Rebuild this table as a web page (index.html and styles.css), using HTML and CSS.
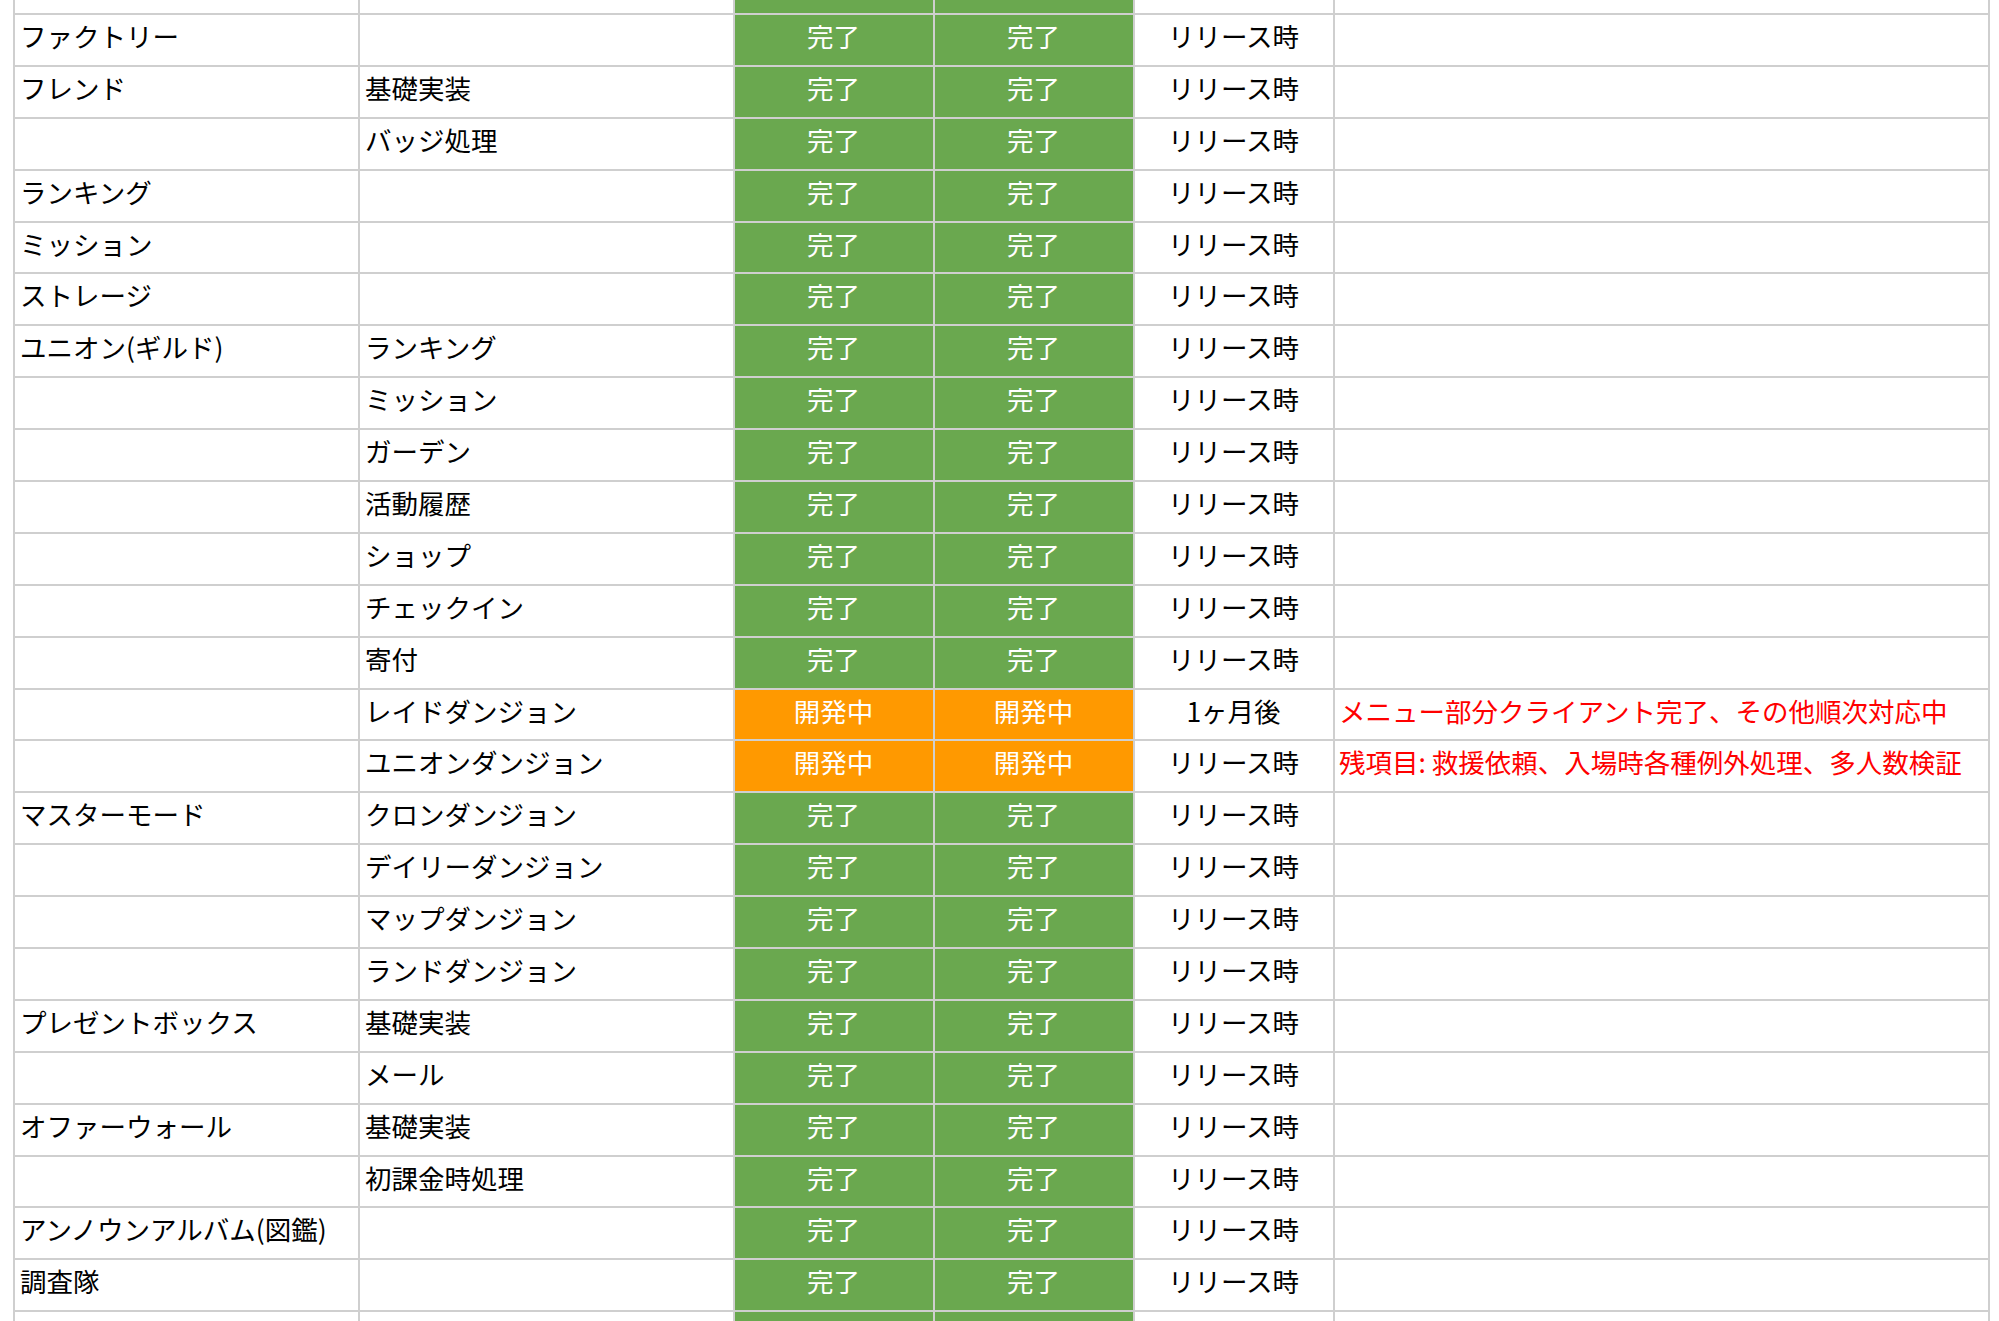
FILE: index.html
```html
<!DOCTYPE html>
<html lang="ja">
<head>
<meta charset="utf-8">
<title>機能実装状況</title>
<link rel="stylesheet" href="styles.css">
</head>
<body>
<table class="sheet">
  <colgroup>
    <col class="c-feature">
    <col class="c-sub">
    <col class="c-status">
    <col class="c-status">
    <col class="c-when">
    <col class="c-note">
  </colgroup>
  <tbody>
    <tr class="row-cut-top"><td></td><td></td><td class="done"></td><td class="done"></td><td></td><td></td></tr>
    <tr><td>ファクトリー</td><td></td><td class="done">完了</td><td class="done">完了</td><td class="when">リリース時</td><td></td></tr>
    <tr><td>フレンド</td><td>基礎実装</td><td class="done">完了</td><td class="done">完了</td><td class="when">リリース時</td><td></td></tr>
    <tr><td></td><td>バッジ処理</td><td class="done">完了</td><td class="done">完了</td><td class="when">リリース時</td><td></td></tr>
    <tr><td>ランキング</td><td></td><td class="done">完了</td><td class="done">完了</td><td class="when">リリース時</td><td></td></tr>
    <tr><td>ミッション</td><td></td><td class="done">完了</td><td class="done">完了</td><td class="when">リリース時</td><td></td></tr>
    <tr><td>ストレージ</td><td></td><td class="done">完了</td><td class="done">完了</td><td class="when">リリース時</td><td></td></tr>
    <tr><td>ユニオン(ギルド)</td><td>ランキング</td><td class="done">完了</td><td class="done">完了</td><td class="when">リリース時</td><td></td></tr>
    <tr><td></td><td>ミッション</td><td class="done">完了</td><td class="done">完了</td><td class="when">リリース時</td><td></td></tr>
    <tr><td></td><td>ガーデン</td><td class="done">完了</td><td class="done">完了</td><td class="when">リリース時</td><td></td></tr>
    <tr><td></td><td>活動履歴</td><td class="done">完了</td><td class="done">完了</td><td class="when">リリース時</td><td></td></tr>
    <tr><td></td><td>ショップ</td><td class="done">完了</td><td class="done">完了</td><td class="when">リリース時</td><td></td></tr>
    <tr><td></td><td>チェックイン</td><td class="done">完了</td><td class="done">完了</td><td class="when">リリース時</td><td></td></tr>
    <tr><td></td><td>寄付</td><td class="done">完了</td><td class="done">完了</td><td class="when">リリース時</td><td></td></tr>
    <tr><td></td><td>レイドダンジョン</td><td class="wip">開発中</td><td class="wip">開発中</td><td class="when">1ヶ月後</td><td class="note">メニュー部分クライアント完了、その他順次対応中</td></tr>
    <tr><td></td><td>ユニオンダンジョン</td><td class="wip">開発中</td><td class="wip">開発中</td><td class="when">リリース時</td><td class="note">残項目: 救援依頼、入場時各種例外処理、多人数検証</td></tr>
    <tr><td>マスターモード</td><td>クロンダンジョン</td><td class="done">完了</td><td class="done">完了</td><td class="when">リリース時</td><td></td></tr>
    <tr><td></td><td>デイリーダンジョン</td><td class="done">完了</td><td class="done">完了</td><td class="when">リリース時</td><td></td></tr>
    <tr><td></td><td>マップダンジョン</td><td class="done">完了</td><td class="done">完了</td><td class="when">リリース時</td><td></td></tr>
    <tr><td></td><td>ランドダンジョン</td><td class="done">完了</td><td class="done">完了</td><td class="when">リリース時</td><td></td></tr>
    <tr><td>プレゼントボックス</td><td>基礎実装</td><td class="done">完了</td><td class="done">完了</td><td class="when">リリース時</td><td></td></tr>
    <tr><td></td><td>メール</td><td class="done">完了</td><td class="done">完了</td><td class="when">リリース時</td><td></td></tr>
    <tr><td>オファーウォール</td><td>基礎実装</td><td class="done">完了</td><td class="done">完了</td><td class="when">リリース時</td><td></td></tr>
    <tr><td></td><td>初課金時処理</td><td class="done">完了</td><td class="done">完了</td><td class="when">リリース時</td><td></td></tr>
    <tr><td>アンノウンアルバム(図鑑)</td><td></td><td class="done">完了</td><td class="done">完了</td><td class="when">リリース時</td><td></td></tr>
    <tr><td>調査隊</td><td></td><td class="done">完了</td><td class="done">完了</td><td class="when">リリース時</td><td></td></tr>
    <tr class="row-cut-bottom"><td></td><td></td><td class="done"></td><td class="done"></td><td></td><td></td></tr>
  </tbody>
</table>
</body>
</html>
```

FILE: styles.css
```css
html, body {
  margin: 0;
  padding: 0;
  background: #ffffff;
  overflow: hidden;
}

body {
  font-family: "Noto Sans CJK JP", "Noto Sans", sans-serif;
  font-size: 26.5px;
  color: #000000;
}

.sheet {
  margin-left: 13px;
  border-collapse: separate;
  border-spacing: 0;
  table-layout: fixed;
  width: 1977px;
  border-left: 2px solid #cfcfcf;
}

.c-feature { width: 345px; }
.c-sub { width: 375px; }
.c-status { width: 200px; }
.c-when { width: 200px; }
.c-note { width: 655px; }

.sheet td {
  box-sizing: border-box;
  height: 51.9px;
  padding: 0 6px 8px 5px;
  border-right: 2px solid #cfcfcf;
  border-bottom: 2px solid #cfcfcf;
  vertical-align: middle;
  white-space: nowrap;
  overflow: hidden;
  line-height: 30px;
}

.sheet .row-cut-top td {
  height: 15px;
  padding: 0;
}

.sheet td.done {
  background: #6aa84f;
  color: #ffffff;
  text-align: center;
}

.sheet td.wip {
  background: #ff9900;
  color: #ffffff;
  text-align: center;
}

.sheet td.when {
  text-align: center;
}

.sheet td.note {
  color: #ff0000;
  padding-left: 4px;
}
```
